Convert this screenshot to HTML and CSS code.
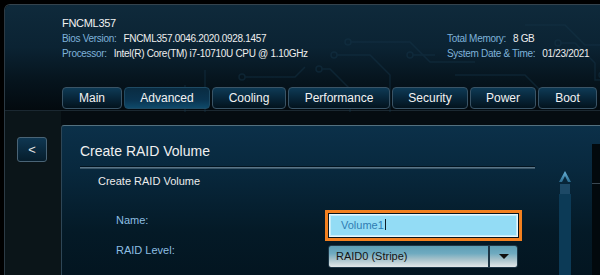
FILE: index.html
```html
<!doctype html>
<html lang="en">
<head>
    <meta charset="utf-8">
    <title>Visual BIOS - Create RAID Volume</title>
    <link rel="stylesheet" href="styles.css">
</head>
<body>
    <div class="frame">
        <header class="top">
            <svg class="circuit" width="600" height="107" viewBox="0 0 600 107">
                <g fill="none" stroke="#16364a" stroke-width="1.5">
                    <path d="M346 37 H405 L425 57 H470"/>
                    <circle cx="343" cy="37" r="3"/>
                    <path d="M332 50 H365 L385 70 V107"/>
                    <circle cx="329" cy="50" r="3"/>
                    <path d="M408 50 H430"/>
                    <circle cx="405" cy="50" r="3"/>
                    <path d="M317 64 H325 L345 84 V107"/>
                    <circle cx="314" cy="64" r="3"/>
                    <path d="M240 72 H290 L300 62"/>
                    <circle cx="237" cy="72" r="3"/>
                    <path d="M180 80 V107 M200 65 V107"/>
                    <path d="M520 20 H560 L580 40 H600"/>
                    <circle cx="553" cy="38" r="3"/>
                    <path d="M556 38 H570 L590 58 V75 H600"/>
                    <path d="M450 70 H520 L535 85"/>
                    <circle cx="597" cy="70" r="3"/>
                </g>
            </svg>
            <div class="sysinfo">
                <div class="info-left">
                    <div class="board">FNCML357</div>
                    <div class="info-row"><span class="key">Bios Version:</span><span class="val">FNCML357.0046.2020.0928.1457</span></div>
                    <div class="info-row"><span class="key">Processor:</span><span class="val">Intel(R) Core(TM) i7-10710U CPU @ 1.10GHz</span></div>
                </div>
                <div class="info-right">
                    <div class="info-row"><span class="key">Total Memory:</span><span class="val">8 GB</span></div>
                    <div class="info-row"><span class="key">System Date &amp; Time:</span><span class="val">01/23/2021</span></div>
                </div>
            </div>
            <nav class="tabs">
                <div class="tab tab-main">Main</div>
                <div class="tab tab-advanced active">Advanced</div>
                <div class="tab tab-cooling">Cooling</div>
                <div class="tab tab-performance">Performance</div>
                <div class="tab tab-security">Security</div>
                <div class="tab tab-power">Power</div>
                <div class="tab tab-boot">Boot</div>
            </nav>
        </header>
        <div class="workspace">
            <div class="nav-col">
                <button class="back" type="button">&lt;</button>
            </div>
            <section class="panel">
                <div class="panel-main">
                    <h1>Create RAID Volume</h1>
                    <div class="rule"></div>
                    <h2>Create RAID Volume</h2>
                    <div class="form">
                        <div class="field">
                            <label class="field-label">Name:</label>
                            <div class="focus-ring">
                                <div class="text-input">Volume1<span class="caret"></span></div>
                            </div>
                        </div>
                        <div class="field field-select">
                            <label class="field-label">RAID Level:</label>
                            <div class="select">
                                <span class="select-value">RAID0 (Stripe)</span>
                                <span class="select-drop"><span class="arrow"></span></span>
                            </div>
                        </div>
                    </div>
                </div>
                <div class="scroll">
                    <svg class="scroll-up" width="12" height="11" viewBox="0 0 12 11">
                        <defs>
                            <linearGradient id="chev" x1="0" y1="0" x2="0" y2="1">
                                <stop offset="0" stop-color="#6ab4da"/>
                                <stop offset="1" stop-color="#2a6a8e"/>
                            </linearGradient>
                        </defs>
                        <path d="M6 0 L12 11 H9 L6 5 L3 11 H0 Z" fill="url(#chev)"/>
                    </svg>
                    <div class="thumb"></div>
                    <div class="track"></div>
                </div>
                <div class="help">
                    <div class="help-line"></div>
                </div>
            </section>
        </div>
    </div>
</body>
</html>
```

FILE: styles.css
```css
body {
    margin: 0;
    width: 600px;
    height: 275px;
    overflow: hidden;
    background-color: #000000;
    font-family: "Liberation Sans", Arial, sans-serif;
}
.frame {
    margin: 4px 0 0 4px;
    height: 271px;
    border-top: 1px solid #34434d;
    border-left: 1px solid #2c3a44;
    border-top-left-radius: 6px;
    display: flex;
    flex-direction: column;
    overflow: hidden;
}
.top {
    position: relative;
    height: 106px;
    padding: 11px 0 0 57px;
    box-sizing: border-box;
    border-bottom: 1px solid #1b2831;
    background: linear-gradient(180deg, #0f2a3b 0%, #0b2333 40%, #06141d 72%, #030a0f 100%);
    flex-shrink: 0;
}
.circuit {
    position: absolute;
    left: 0;
    top: 0;
    opacity: 0.45;
}
.sysinfo {
    position: relative;
    display: flex;
}
.info-left {
    width: 385px;
}
.info-right {
    margin-top: 15px;
}
.board {
    font-size: 11px;
    line-height: 15px;
    letter-spacing: -0.3px;
    color: #f2f2f2;
}
.info-row {
    font-size: 10px;
    line-height: 15px;
    letter-spacing: -0.3px;
    white-space: nowrap;
}
.key {
    color: #7eb2da;
}
.val {
    color: #eeeeee;
    margin-left: 7px;
}
.tabs {
    position: relative;
    display: flex;
    gap: 2px;
    margin-top: 26px;
}
.tab {
    height: 22px;
    box-sizing: border-box;
    border: 1px solid #3a5466;
    border-radius: 4px;
    background: linear-gradient(180deg, #0e3a55 0%, #072437 55%, #03131d 100%);
    color: #f2f2f2;
    font-size: 12px;
    line-height: 20px;
    text-align: center;
}
.tab.active {
    border-color: #1f4a63;
    background: linear-gradient(180deg, #092c42 0%, #0a3450 60%, #0f4a6a 100%);
}
.tab-main { width: 60px; }
.tab-advanced { width: 86px; }
.tab-cooling { width: 74px; }
.tab-performance { width: 102px; }
.tab-security { width: 76px; }
.tab-power { width: 66px; }
.tab-boot { width: 59px; }
.workspace {
    flex: 1;
    display: flex;
    background-color: #050c11;
}
.nav-col {
    width: 56px;
    flex-shrink: 0;
    padding: 26px 0 0 12px;
    box-sizing: border-box;
    background-color: #0b1519;
}
.back {
    width: 30px;
    height: 25px;
    padding: 0;
    border: 1px solid #4a6476;
    border-radius: 3px;
    background: linear-gradient(180deg, #0f3752 0%, #061d2c 100%);
    color: #e6e6e6;
    font-family: "Liberation Sans", Arial, sans-serif;
    font-size: 13px;
    line-height: 21px;
}
.panel {
    flex: 1;
    margin-top: 14px;
    display: flex;
    overflow: hidden;
    border-top: 1px solid #53707f;
    border-left: 1px solid #2e4656;
    border-top-left-radius: 3px;
    background: linear-gradient(180deg, #0b3049 0%, #08283d 30%, #041a27 70%, #031520 100%);
}
.panel-main {
    width: 473px;
    flex-shrink: 0;
    padding: 15px 0 0 18px;
    box-sizing: border-box;
}
.panel-main h1 {
    margin: 0;
    font-size: 14px;
    line-height: 20px;
    font-weight: normal;
    color: #f0f0f0;
}
.rule {
    margin-top: 6px;
    height: 0;
    border-top: 1px solid #5a7587;
    border-bottom: 1px solid #3a5567;
    box-shadow: 0 -1px 0 #021420;
}
.panel-main h2 {
    margin: 5px 0 0 18px;
    font-size: 11px;
    line-height: 15px;
    font-weight: normal;
    color: #ececec;
}
.form {
    margin-top: 21px;
    padding-left: 36px;
}
.field {
    display: flex;
}
.field-label {
    width: 209px;
    flex-shrink: 0;
    padding-top: 3px;
    font-size: 11px;
    line-height: 15px;
    color: #8dbfe2;
}
.focus-ring {
    width: 197px;
    height: 31px;
    box-sizing: border-box;
    border: 3px solid #f3801f;
    padding: 1px;
    background-color: #05141d;
}
.text-input {
    height: 23px;
    box-sizing: border-box;
    border: 1px solid #e8f8fd;
    box-shadow: inset 0 0 0 1px #c4ecf8;
    background-color: #93dcf5;
    padding-left: 11px;
    font-size: 11px;
    line-height: 21px;
    color: #2f7db3;
}
.caret {
    display: inline-block;
    width: 1px;
    height: 11px;
    margin-left: 1px;
    vertical-align: -1px;
    background-color: #0e1e28;
}
.field-select {
    margin-top: 2px;
}
.field-select .field-label {
    padding-top: 0;
}
.select {
    display: flex;
    width: 190px;
    height: 23px;
    margin: 2px 0 0 3px;
    box-sizing: border-box;
    border: 1px solid #1e3747;
    border-radius: 3px;
    background: linear-gradient(180deg, #5d9db5 0%, #6eaac0 35%, #a3c0c9 62%, #e4e8e9 100%);
}
.select-value {
    flex: 1;
    padding-left: 7px;
    font-size: 11px;
    line-height: 21px;
    color: #141414;
}
.select-drop {
    width: 27px;
    border-left: 2px solid #1c3545;
    display: flex;
    align-items: center;
    justify-content: center;
}
.arrow {
    width: 0;
    height: 0;
    border-left: 5px solid transparent;
    border-right: 5px solid transparent;
    border-top: 5px solid #101010;
}
.scroll {
    width: 12px;
    flex-shrink: 0;
    margin: 45px 0 0 24px;
    display: flex;
    flex-direction: column;
    align-items: center;
}
.scroll-up {
    display: block;
}
.thumb {
    width: 10px;
    height: 10px;
    margin-top: 2px;
    background-color: #1d4966;
}
.track {
    width: 12px;
    flex: 1;
    background-color: #0c3a56;
}
.help {
    width: 40px;
    flex-shrink: 0;
    margin: 18px 0 0 21px;
    background-color: #02090d;
}
.help-line {
    margin-top: 39px;
    height: 1px;
    background-color: #3a4852;
}
```
